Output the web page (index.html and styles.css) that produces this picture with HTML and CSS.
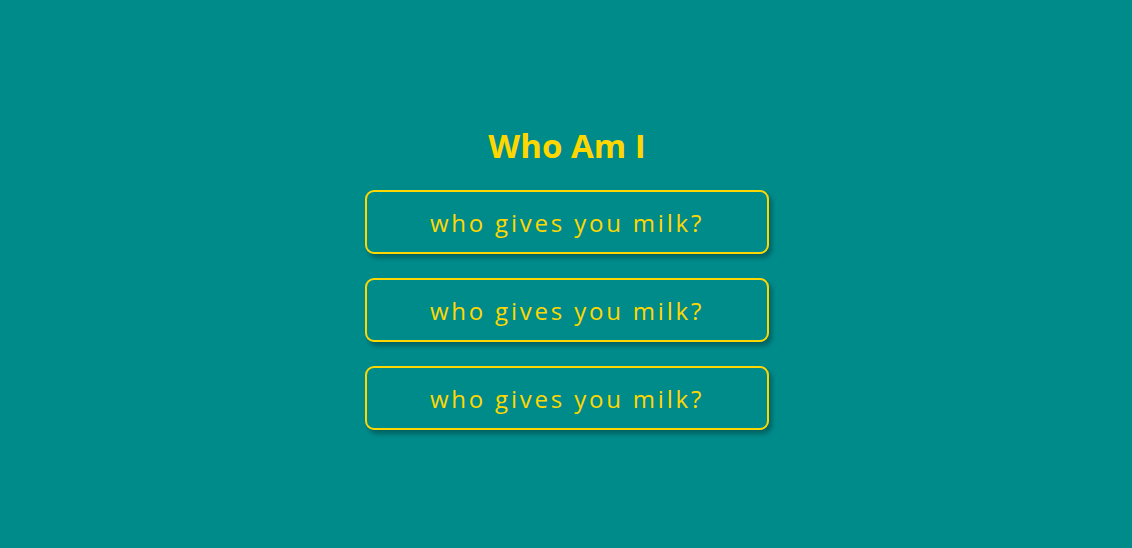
FILE: index.html
```html
<!DOCTYPE html>
<html>
<head>
<meta charset="utf-8">
<link rel="stylesheet" href="styles.css">
</head>
<body>
<main class="quiz">
  <h1 class="title">Who Am I</h1>
  <button class="option">who gives you milk?</button>
  <button class="option">who gives you milk?</button>
  <button class="option">who gives you milk?</button>
</main>
</body>
</html>
```
FILE: styles.css
```css
html, body {
  margin: 0;
  padding: 0;
  height: 100%;
}
body {
  background: #008b8b;
  font-family: "Open Sans", "Noto Sans", sans-serif;
  display: flex;
  align-items: center;
  justify-content: center;
}
.quiz {
  display: flex;
  flex-direction: column;
  align-items: center;
  gap: 24px;
  margin-top: 8px;
  margin-left: 2px;
}
.title {
  margin: 0;
  color: #ffd700;
  font-size: 33px;
  font-weight: 700;
  line-height: 40px;
  letter-spacing: 0;
}
.option {
  width: 404px;
  height: 64px;
  box-sizing: border-box;
  background: transparent;
  border: 2px solid #ffd700;
  border-radius: 9px;
  box-shadow: 3px 4px 5px rgba(0, 0, 0, 0.3);
  color: #ffd700;
  font-family: "Open Sans", "Noto Sans", sans-serif;
  font-size: 24px;
  letter-spacing: 2.8px;
  padding: 0;
}
```
